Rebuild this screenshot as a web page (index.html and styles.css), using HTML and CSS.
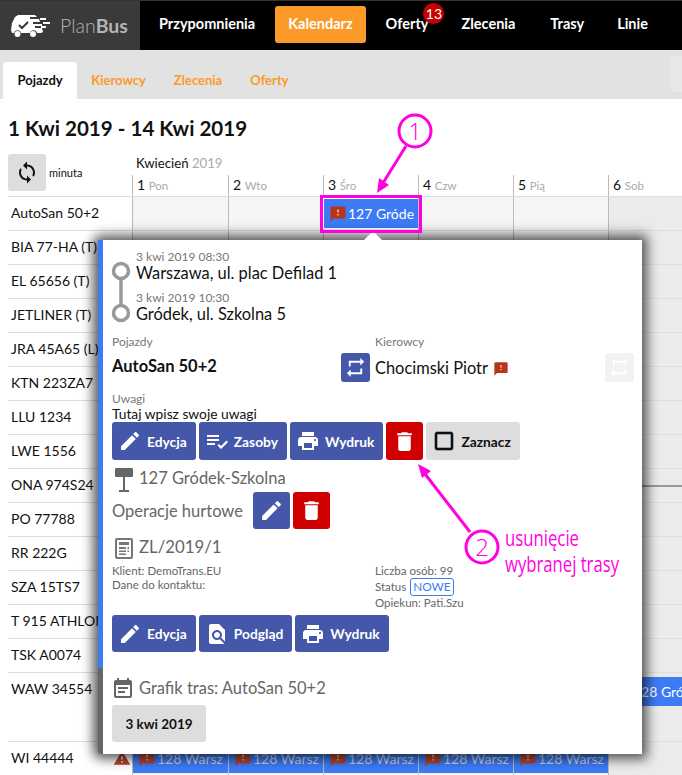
FILE: index.html
```html
<!DOCTYPE html>
<html lang="pl">
<head>
    <meta charset="UTF-8">
    <title>PlanBus Kalendarz</title>
    <link rel="stylesheet" href="styles.css">
</head>
<body>
    <svg class="defs" width="0" height="0">
        <symbol id="i-edit" viewBox="0 0 24 24"><path d="M3 17.25V21h3.75L17.81 9.94l-3.75-3.75L3 17.25zM20.71 7.04c.39-.39.39-1.02 0-1.41l-2.34-2.34c-.39-.39-1.02-.39-1.41 0l-1.83 1.83 3.75 3.75 1.83-1.83z"/></symbol>
        <symbol id="i-print" viewBox="0 0 24 24"><path d="M19 8H5c-1.66 0-3 1.34-3 3v6h4v4h12v-4h4v-6c0-1.66-1.34-3-3-3zm-3 11H8v-5h8v5zm3-7c-.55 0-1-.45-1-1s.45-1 1-1 1 .45 1 1-.45 1-1 1zm-1-9H6v4h12V3z"/></symbol>
        <symbol id="i-delete" viewBox="0 0 24 24"><path d="M6 19c0 1.1.9 2 2 2h8c1.1 0 2-.9 2-2V7H6v12zM19 4h-3.5l-1-1h-5l-1 1H5v2h14V4z"/></symbol>
        <symbol id="i-list" viewBox="0 0 24 24"><path d="M14 10H2v2h12v-2zm0-4H2v2h12V6zM2 16h8v-2H2v2zm19.5-4.5L23 13l-6.99 7-3.51-3.5L14 15l2.01 2 5.49-5.5z"/></symbol>
        <symbol id="i-box" viewBox="0 0 24 24"><path d="M19 5v14H5V5h14m0-2H5c-1.1 0-2 .9-2 2v14c0 1.1.9 2 2 2h14c1.1 0 2-.9 2-2V5c0-1.1-.9-2-2-2z"/></symbol>
        <symbol id="i-find" viewBox="0 0 24 24"><path d="M20 19.59V8l-6-6H6c-1.1 0-1.99.9-1.99 2L4 20c0 1.1.89 2 1.99 2H18c.45 0 .85-.15 1.19-.4l-4.43-4.43c-.8.52-1.74.83-2.76.83-2.76 0-5-2.24-5-5s2.24-5 5-5 5 2.24 5 5c0 1.02-.31 1.96-.83 2.75L20 19.59zM9 13c0 1.66 1.34 3 3 3s3-1.34 3-3-1.34-3-3-3-3 1.34-3 3z"/></symbol>
        <symbol id="i-repeat" viewBox="0 0 24 24"><path d="M7 7h10v3l4-4-4-4v3H5v6h2V7zm10 10H7v-3l-4 4 4 4v-3h12v-6h-2v4z"/></symbol>
        <symbol id="i-sync" viewBox="0 0 24 24"><path d="M12 4V1L8 5l4 4V6c3.31 0 6 2.69 6 6 0 1.01-.25 1.97-.7 2.8l1.46 1.46C19.54 15.03 20 13.57 20 12c0-4.42-3.58-8-8-8zm0 14c-3.31 0-6-2.69-6-6 0-1.01.25-1.97.7-2.8L5.24 7.74C4.46 8.97 4 10.43 4 12c0 4.42 3.58 8 8 8v3l4-4-4-4v3z"/></symbol>
        <symbol id="i-alert" viewBox="0 0 24 24"><rect x="10" y="5" width="4" height="10" fill="#f2c4b8"/><path d="M20 2H4c-1.1 0-1.99.9-1.99 2L2 22l4-4h14c1.1 0 2-.9 2-2V4c0-1.1-.9-2-2-2zm-7 12h-2v-2h2v2zm0-4h-2V6h2v4z"/></symbol>
        <symbol id="i-warning" viewBox="0 0 24 24"><path d="M1 21h22L12 2 1 21zm12-3h-2v-2h2v2zm0-4h-2v-4h2v4z"/></symbol>
        <symbol id="i-event" viewBox="0 0 24 24"><path d="M17 10H7v2h10v-2zm2-7h-1V1h-2v2H8V1H6v2H5c-1.11 0-1.99.9-1.99 2L3 19c0 1.1.89 2 2 2h14c1.1 0 2-.9 2-2V5c0-1.1-.9-2-2-2zm0 16H5V8h14v11zm-5-5H7v2h7v-2z"/></symbol>
    </svg>

    <header class="topbar">
        <div class="logo">
            <svg class="logo-mark" viewBox="0 0 40 22">
                <path d="M7 0h17l2 2h-7v2h9l1 3h-7v2h9v2h-7v2h7l1 4-2 1h-4a3.6 3.6 0 0 0-7 0H10a3.6 3.6 0 0 0-7 0H1l-1-3 1-7 3-6z" fill="#fff"/>
                <path d="M8 10l3 3 6-6" fill="none" stroke="#3a3a3a" stroke-width="2"/>
                <circle cx="6.5" cy="19" r="3" fill="#fff"/>
                <circle cx="22" cy="19" r="3" fill="#fff"/>
                <path d="M29 3h6v2h-6zM32 7h7v2h-7zM30 11h5v2h-5z" fill="#fff"/>
            </svg>
            <span class="logo-name">Plan<b>Bus</b></span>
        </div>
        <nav class="mainnav">
            <a>Przypomnienia</a>
            <a class="active">Kalendarz</a>
            <a class="has-badge">Oferty<span class="badge">13</span></a>
            <a class="wide">Zlecenia</a>
            <a>Trasy</a>
            <a>Linie</a>
        </nav>
    </header>

    <div class="subbar">
        <a class="tab active">Pojazdy</a>
        <a class="tab">Kierowcy</a>
        <a class="tab">Zlecenia</a>
        <a class="tab">Oferty</a>
        <div class="subbar-box"></div>
    </div>

    <h1 class="range">1 Kwi 2019 - 14 Kwi 2019</h1>

    <div class="calendar">
        <div class="cal-head">
            <div class="cal-tools">
                <button class="refresh"><svg class="icon"><use href="#i-sync"/></svg></button>
                <span class="minuta">minuta</span>
            </div>
            <div class="month">Kwiecień <span>2019</span></div>
            <div class="days">
                <div class="day">1 <span>Pon</span></div>
                <div class="day">2 <span>Wto</span></div>
                <div class="day">3 <span>Śro</span></div>
                <div class="day">4 <span>Czw</span></div>
                <div class="day">5 <span>Pią</span></div>
                <div class="day">6 <span>Sob</span></div>
            </div>
        </div>

        <div class="row">
            <div class="name">AutoSan 50+2</div>
            <div class="cell"></div><div class="cell"></div>
            <div class="cell"><div class="chip chip-picked"><svg class="icon"><use href="#i-alert"/></svg>127 Gróde</div></div>
            <div class="cell"></div><div class="cell"></div><div class="cell"></div>
        </div>
        <div class="row"><div class="name">BIA 77-HA (T)</div><div class="cell"></div><div class="cell"></div><div class="cell"></div><div class="cell"></div><div class="cell"></div><div class="cell"></div></div>
        <div class="row"><div class="name">EL 65656 (T)</div><div class="cell"></div><div class="cell"></div><div class="cell"></div><div class="cell"></div><div class="cell"></div><div class="cell"></div></div>
        <div class="row"><div class="name">JETLINER (T)</div><div class="cell"></div><div class="cell"></div><div class="cell"></div><div class="cell"></div><div class="cell"></div><div class="cell"></div></div>
        <div class="row"><div class="name">JRA 45A65 (L)</div><div class="cell"></div><div class="cell"></div><div class="cell"></div><div class="cell"></div><div class="cell"></div><div class="cell"></div></div>
        <div class="row"><div class="name">KTN 223ZA7</div><div class="cell"></div><div class="cell"></div><div class="cell"></div><div class="cell"></div><div class="cell"></div><div class="cell"></div></div>
        <div class="row"><div class="name">LLU 1234</div><div class="cell"></div><div class="cell"></div><div class="cell"></div><div class="cell"></div><div class="cell"></div><div class="cell"></div></div>
        <div class="row"><div class="name">LWE 1556</div><div class="cell"></div><div class="cell"></div><div class="cell"></div><div class="cell"></div><div class="cell"></div><div class="cell"></div></div>
        <div class="row row-marked"><div class="name">ONA 974S24</div><div class="cell"></div><div class="cell"></div><div class="cell"></div><div class="cell"></div><div class="cell"></div><div class="cell"></div></div>
        <div class="row"><div class="name">PO 77788</div><div class="cell"></div><div class="cell"></div><div class="cell"></div><div class="cell"></div><div class="cell"></div><div class="cell"></div></div>
        <div class="row"><div class="name">RR 222G</div><div class="cell"></div><div class="cell"></div><div class="cell"></div><div class="cell"></div><div class="cell"></div><div class="cell"></div></div>
        <div class="row"><div class="name">SZA 15TS7</div><div class="cell"></div><div class="cell"></div><div class="cell"></div><div class="cell"></div><div class="cell"></div><div class="cell"></div></div>
        <div class="row"><div class="name">T 915 ATHLON</div><div class="cell"></div><div class="cell"></div><div class="cell"></div><div class="cell"></div><div class="cell"></div><div class="cell"></div></div>
        <div class="row"><div class="name">TSK A0074</div><div class="cell"></div><div class="cell"></div><div class="cell"></div><div class="cell"></div><div class="cell"></div><div class="cell"></div></div>
        <div class="row row-tall">
            <div class="name">WAW 34554</div>
            <div class="cell"></div><div class="cell"></div><div class="cell"></div><div class="cell"></div><div class="cell"></div>
            <div class="cell"><div class="chip"><svg class="icon"><use href="#i-alert"/></svg>128 Gró</div></div>
        </div>
        <div class="row">
            <div class="name">WI 44444<svg class="icon warn"><use href="#i-warning"/></svg></div>
            <div class="cell"><div class="chip chip-dim"><svg class="icon"><use href="#i-alert"/></svg>128 Warsz</div></div>
            <div class="cell"><div class="chip chip-dim"><svg class="icon"><use href="#i-alert"/></svg>128 Warsz</div></div>
            <div class="cell"><div class="chip chip-dim"><svg class="icon"><use href="#i-alert"/></svg>128 Warsz</div></div>
            <div class="cell"><div class="chip chip-dim"><svg class="icon"><use href="#i-alert"/></svg>128 Warsz</div></div>
            <div class="cell"><div class="chip chip-dim"><svg class="icon"><use href="#i-alert"/></svg>128 Warsz</div></div>
            <div class="cell"></div>
        </div>
    </div>

    <div class="popover">
        <div class="stops">
            <svg class="stops-line" viewBox="0 0 20 62">
                <circle cx="10" cy="10" r="7.5"/>
                <circle cx="10" cy="52" r="7.5"/>
                <path d="M10 18v26"/>
            </svg>
            <div>
                <div class="stop-time">3 kwi 2019 08:30</div>
                <div class="stop-place">Warszawa, ul. plac Defilad 1</div>
                <div class="stop-time stop-second">3 kwi 2019 10:30</div>
                <div class="stop-place">Gródek, ul. Szkolna 5</div>
            </div>
        </div>

        <div class="assign">
            <div class="assign-vehicle">
                <div class="small">Pojazdy</div>
                <div class="vehicle-name">AutoSan 50+2</div>
            </div>
            <div class="assign-driver">
                <div class="small driver-label">Kierowcy</div>
                <div class="driver-row">
                    <button class="btn btn-square"><svg class="icon"><use href="#i-repeat"/></svg></button>
                    <span class="driver-name">Chocimski Piotr</span>
                    <svg class="icon alert"><use href="#i-alert"/></svg>
                    <button class="btn btn-square btn-off"><svg class="icon"><use href="#i-repeat"/></svg></button>
                </div>
            </div>
        </div>

        <div class="small notes-label">Uwagi</div>
        <div class="notes">Tutaj wpisz swoje uwagi</div>
        <div class="btns">
            <button class="btn"><svg class="icon"><use href="#i-edit"/></svg>Edycja</button>
            <button class="btn"><svg class="icon"><use href="#i-list"/></svg>Zasoby</button>
            <button class="btn"><svg class="icon"><use href="#i-print"/></svg>Wydruk</button>
            <button class="btn btn-red"><svg class="icon"><use href="#i-delete"/></svg></button>
            <button class="btn btn-grey"><svg class="icon"><use href="#i-box"/></svg>Zaznacz</button>
        </div>

        <div class="heading route-heading">
            <svg class="heading-icon" viewBox="0 0 18 24"><path d="M1 0h16a1 1 0 0 1 1 1v7a1 1 0 0 1-1 1H1a1 1 0 0 1-1-1V1a1 1 0 0 1 1-1zM8 9h2v13H8zM4 22h10v2H4z"/></svg>
            127 Gródek-Szkolna
        </div>
        <div class="bulk">
            <span class="bulk-label">Operacje hurtowe</span>
            <button class="btn btn-square2"><svg class="icon"><use href="#i-edit"/></svg></button>
            <button class="btn btn-square2 btn-red"><svg class="icon"><use href="#i-delete"/></svg></button>
        </div>

        <div class="heading order-heading">
            <svg class="heading-icon" viewBox="0 0 18 21"><path fill-rule="evenodd" d="M2 0h14a2 2 0 0 1 2 2v17a2 2 0 0 1-2 2H2a2 2 0 0 1-2-2V2a2 2 0 0 1 2-2zm0 2v17h14V2zM4 4h10v3H4zM4 9h7v2H4zM12.500 9H14v2h-1.500zM4 12.500h7v1.500H4zM12.500 12.500H14V14h-1.500zM4 15.500h7V17H4z"/></svg>
            ZL/2019/1
        </div>
        <div class="order-info">
            <div class="order-left">
                <div>Klient: DemoTrans.EU</div>
                <div>Dane do kontaktu:</div>
            </div>
            <div class="order-right">
                <div>Liczba osób: 99</div>
                <div class="status-line">Status <span class="status">NOWE</span></div>
                <div>Opiekun: Pati.Szu</div>
            </div>
        </div>
        <div class="btns btns-low">
            <button class="btn"><svg class="icon"><use href="#i-edit"/></svg>Edycja</button>
            <button class="btn"><svg class="icon"><use href="#i-find"/></svg>Podgląd</button>
            <button class="btn"><svg class="icon"><use href="#i-print"/></svg>Wydruk</button>
        </div>

        <div class="heading plan-heading">
            <svg class="heading-icon" viewBox="3 1 18 20"><use href="#i-event" width="24" height="24"/></svg>
            Grafik tras: AutoSan 50+2
        </div>
        <button class="date-btn">3 kwi 2019</button>
    </div>

    <!-- znaczniki na zrzucie -->
    <svg class="notes-layer" width="682" height="775">
        <rect class="mark" x="321.500" y="196.500" width="99" height="35"/>
        <circle class="mark" cx="415" cy="131" r="16"/>
        <text class="mark-num" x="415" y="140">1</text>
        <path class="mark" d="M406 146L383 183"/>
        <path class="mark-head" d="M377 193l2-15 10 7z"/>
        <circle class="mark" cx="482" cy="547" r="16"/>
        <text class="mark-num" x="482" y="556">2</text>
        <path class="mark" d="M470 532L425 474"/>
        <path class="mark-head" d="M418 464l13 7-9 7z"/>
        <text class="mark-text" x="505" y="546" textLength="74" lengthAdjust="spacingAndGlyphs">usunięcie</text>
        <text class="mark-text" x="505" y="572" textLength="114" lengthAdjust="spacingAndGlyphs">wybranej trasy</text>
    </svg>
</body>
</html>
```

FILE: styles.css
```css
* {
    box-sizing: border-box;
}
html, body {
    height: 775px;
    overflow: hidden;
}
body {
    margin: 0;
    position: relative;
    font-family: Lato, "Open Sans", sans-serif;
    font-size: 14px;
    color: #111;
    background: #fff;
}
.defs {
    position: absolute;
}
.icon {
    fill: currentColor;
}

/* top bar */
.topbar {
    display: flex;
    height: 50px;
    background: #000;
    border-top: 1px solid #333;
}
.logo {
    display: flex;
    align-items: center;
    width: 140px;
    padding-left: 11px;
    background: #3a3a3a;
}
.logo-mark {
    width: 40px;
    height: 22px;
}
.logo-name {
    margin-left: 9px;
    font-size: 19.500px;
    font-weight: 300;
    color: #b4b4b4;
}
.logo-name b {
    font-weight: 700;
}
.mainnav {
    display: flex;
    align-items: center;
    margin-left: 6px;
    padding-bottom: 2px;
    gap: 7px;
}
.mainnav a {
    position: relative;
    height: 37px;
    line-height: 36px;
    padding: 0 13px;
    font-size: 14.500px;
    font-weight: 700;
    color: #fff;
    border-radius: 3px;
}
.mainnav a.active {
    background: #fb9a28;
}
.mainnav a.wide {
    padding-right: 15px;
}
.badge {
    position: absolute;
    top: -3px;
    right: -3px;
    width: 21px;
    height: 21px;
    line-height: 21px;
    border-radius: 50%;
    background: #c80000;
    font-size: 14px;
    font-weight: 400;
    text-align: center;
}

/* second bar */
.subbar {
    position: relative;
    display: flex;
    align-items: flex-end;
    height: 49px;
    padding-left: 3px;
    background: #e2e2e2;
}
.tab {
    height: 37px;
    line-height: 37px;
    padding: 0 14px;
    font-size: 13px;
    font-weight: 700;
    color: #fb9a28;
}
.tab.active {
    padding: 0 14.500px;
    background: #fff;
    color: #111;
    border-radius: 3px 3px 0 0;
}
.subbar-box {
    position: absolute;
    top: 6px;
    right: 0;
    width: 12px;
    height: 36px;
    background: #e8e8e8;
    border-radius: 4px 0 0 4px;
}

.range {
    margin: 0;
    height: 55px;
    padding: 17px 0 0 8px;
    font-size: 20.600px;
    line-height: 24px;
    font-weight: 700;
}

/* calendar */
.calendar {
    margin-left: 8px;
}
.cal-head {
    position: relative;
    height: 43px;
    padding-left: 124px;
    border-bottom: 1px solid #ddd;
}
.cal-tools {
    position: absolute;
    left: 0;
    top: 0;
    display: flex;
    align-items: center;
}
.refresh {
    width: 38px;
    height: 37px;
    padding: 6px 7px;
    border: 0;
    border-radius: 3px;
    background: #ddd;
    color: #111;
}
.refresh .icon {
    width: 24px;
    height: 25px;
}
.minuta {
    margin-left: 3px;
    padding-bottom: 1px;
    font-size: 11px;
}
.month {
    height: 21px;
    padding-left: 4px;
    line-height: 19px;
    font-size: 13.200px;
}
.month span {
    color: #aaa;
}
.days {
    display: grid;
    grid-template-columns: 96px repeat(4, 95px) 1fr;
    height: 21px;
}
.day {
    padding-left: 4px;
    border-left: 1px solid #bbb;
    line-height: 20px;
    font-size: 14px;
}
.day span {
    font-size: 11.500px;
    color: #aaa;
}
.row {
    display: grid;
    grid-template-columns: 124px 96px repeat(4, 95px) 1fr;
    height: 34px;
    border-bottom: 1px solid #ddd;
}
.row-tall {
    height: 69px;
}
.row-marked {
    position: relative;
}
.row-marked::after {
    content: "";
    position: absolute;
    left: 124px;
    right: 0;
    top: 16px;
    height: 2px;
    background: #999;
}
.name {
    display: flex;
    align-items: flex-start;
    padding-left: 3px;
    line-height: 32px;
    white-space: nowrap;
    overflow: hidden;
}
.warn {
    flex: none;
    width: 18px;
    height: 18px;
    margin: 7px 1px 0 auto;
    color: #b5452e;
}
.cell {
    min-width: 0;
    border-left: 1px solid #bbb;
    background: #f5f5f5;
}
.cell:last-child {
    background: #ebebeb;
}
.chip {
    display: flex;
    align-items: center;
    height: 29px;
    margin-top: 2px;
    padding-left: 5px;
    background: #3d7bf5;
    color: #fff;
    white-space: nowrap;
    overflow: hidden;
}
.chip .icon {
    flex: none;
    width: 18px;
    height: 18px;
    margin-right: 1px;
    color: #b8341b;
}
.chip-picked {
    outline: 1px solid #fff;
}
.row-tall .chip {
    margin-top: 4px;
}
.chip-dim {
    color: #c6d4ee;
}
.chip-dim .icon {
    color: #b5452e;
}

/* popover */
.popover {
    position: absolute;
    left: 98px;
    top: 240px;
    width: 544px;
    height: 514px;
    padding: 10px 0 0 9px;
    border-left: 5px solid #666;
    border-radius: 4px 0 0 4px;
    background: #fff;
    box-shadow: 0 0 12px 5px rgba(0, 0, 0, .65);
}
.popover::before {
    content: "";
    position: absolute;
    left: -5px;
    top: 0;
    width: 5px;
    height: 428px;
    background: #3d7bf5;
}
.popover::after {
    content: "";
    position: absolute;
    left: 261px;
    top: -9px;
    border: 9px solid transparent;
    border-top: 0;
    border-bottom-color: #fff;
}
.stops {
    display: flex;
    margin-left: -1px;
}
.stops-line {
    flex: none;
    width: 20px;
    height: 62px;
    margin: 11px 5px 0 0;
    fill: none;
    stroke: #999;
    stroke-width: 3.500;
}
.stop-time {
    font-size: 12px;
    line-height: 14px;
    color: #777;
}
.stop-second {
    margin-top: 9px;
}
.stop-place {
    font-size: 16.400px;
    line-height: 18px;
}
.small {
    font-size: 12px;
    line-height: 14px;
    color: #777;
}
.assign {
    display: flex;
    margin-top: 12px;
}
.assign-vehicle {
    width: 229px;
}
.vehicle-name {
    margin-top: 6px;
    font-size: 16.500px;
    line-height: 22px;
    font-weight: 700;
}
.assign-driver {
    flex: 1;
}
.driver-label {
    padding-left: 34px;
}
.driver-row {
    display: flex;
    align-items: center;
    margin-top: 4px;
}
.driver-name {
    margin-left: 5px;
    font-size: 16.400px;
}
.alert {
    width: 16px;
    height: 16px;
    margin: 2px 0 0 5px;
    color: #b8341b;
}
.btn {
    display: flex;
    align-items: center;
    height: 38px;
    padding: 0 9px 0 6px;
    border: 0;
    border-radius: 3px;
    background: #4557a9;
    color: #fff;
    font-family: Lato, "Open Sans", sans-serif;
    font-size: 13.800px;
    font-weight: 700;
}
.btn .icon {
    width: 24px;
    height: 24px;
    margin-right: 5px;
}
.btn-square {
    width: 29px;
    height: 29px;
    padding: 3px;
}
.btn-square .icon {
    width: 23px;
    height: 23px;
    margin: 0;
}
.btn-off {
    margin-left: auto;
    margin-right: 8px;
    background: #f2f2f2;
    color: #fff;
}
.btn-square2 {
    width: 37px;
    height: 37px;
    padding: 6px;
}
.btn-square2 .icon {
    width: 25px;
    height: 25px;
    margin: 0;
}
.btn-red {
    background: #d00000;
}
.btns .btn-red {
    width: 37px;
    padding: 0 6px;
}
.btns .btn-red .icon {
    width: 25px;
    height: 25px;
    margin: 0;
}
.btn-grey {
    background: #ddd;
    color: #111;
}
.btn-grey .icon {
    stroke: currentColor;
    stroke-width: .6;
}
.notes-label {
    margin-top: 10px;
}
.notes {
    font-size: 13.800px;
    line-height: 15px;
    margin-bottom: 1px;
}
.btns {
    display: flex;
    gap: 3px;
}
.btns-low .btn {
    height: 37px;
}
.heading {
    display: flex;
    align-items: flex-start;
    font-size: 16.500px;
    color: #666;
}
.heading-icon {
    flex: none;
    fill: #666;
    margin: 0 6px 0 3px;
    width: 18px;
}
.route-heading {
    height: 24px;
    margin-top: 8px;
    line-height: 20px;
}
.route-heading .heading-icon {
    height: 24px;
}
.bulk {
    display: flex;
    align-items: center;
    gap: 3px;
}
.bulk-label {
    width: 138px;
    font-size: 16.500px;
    color: #666;
}
.order-heading {
    height: 21px;
    margin-top: 9px;
    font-size: 16.800px;
    line-height: 18px;
}
.order-heading .heading-icon {
    height: 21px;
    fill: #777;
}
.order-info {
    display: flex;
    margin-top: 5px;
    height: 51px;
    font-size: 11.500px;
    color: #666;
}
.order-left {
    width: 263px;
    line-height: 14px;
}
.order-right {
    margin-top: -1px;
    line-height: 16px;
}
.status-line {
    display: flex;
    align-items: center;
    gap: 4px;
    height: 16px;
}
.status {
    height: 18px;
    padding: 0 2px;
    line-height: 16px;
    font-size: 11.800px;
    border: 1px solid #3d7bf5;
    border-radius: 3px;
    color: #3d7bf5;
}
.plan-heading {
    height: 20px;
    margin-top: 26px;
    line-height: 20px;
}
.plan-heading .heading-icon {
    height: 20px;
    margin: 0 7px 0 2px;
}
.date-btn {
    display: block;
    width: 94px;
    height: 37px;
    margin-top: 7px;
    border: 0;
    border-radius: 3px;
    background: #ddd;
    color: #111;
    font-family: Lato, "Open Sans", sans-serif;
    font-size: 13.500px;
    font-weight: 700;
}

/* annotations */
.notes-layer {
    position: absolute;
    left: 0;
    top: 0;
}
.mark {
    fill: none;
    stroke: #ff00e0;
    stroke-width: 3;
}
.mark-head {
    fill: #ff00e0;
}
.mark-num {
    fill: #ff00e0;
    font-family: "Open Sans", sans-serif;
    font-size: 24px;
    font-weight: 300;
    text-anchor: middle;
}
.mark-text {
    fill: #ff00e0;
    font-family: "Open Sans", sans-serif;
    font-size: 21px;
}
```
